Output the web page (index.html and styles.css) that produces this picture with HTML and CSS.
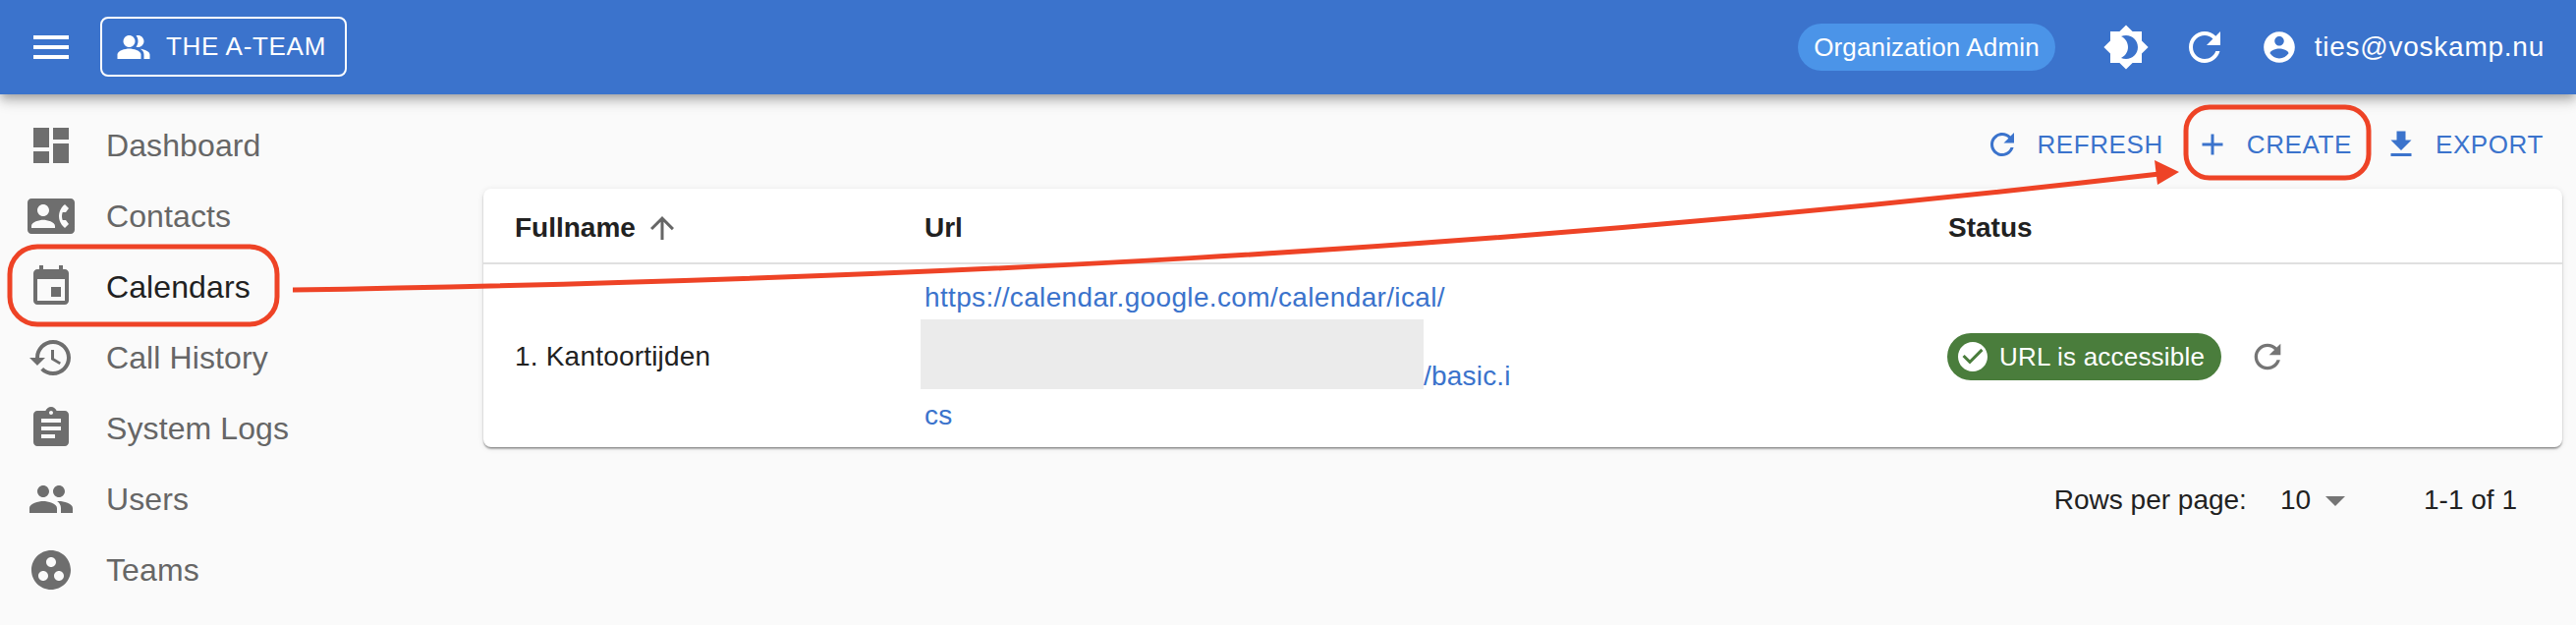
FILE: index.html
```html
<!DOCTYPE html>
<html lang="en">
<head>
    <meta charset="UTF-8">
    <meta name="viewport" content="width=device-width, initial-scale=1.0">
    <title>Calendars</title>
    <link rel="stylesheet" href="styles.css">
</head>
<body>
    <header class="app-bar">
        <svg class="icon-48" viewBox="0 0 24 24"><path d="M3 18h18v-2H3v2zm0-5h18v-2H3v2zm0-7v2h18V6H3z"/></svg>
        <button class="team-button">
            <svg class="icon-36" viewBox="0 0 24 24"><path d="M16.67 13.13C18.04 14.06 19 15.32 19 17v3h4v-3c0-2.18-3.57-3.47-6.33-3.87z"/><path d="M15 12c2.21 0 4-1.79 4-4s-1.79-4-4-4c-.47 0-.91.1-1.33.24C14.5 5.27 15 6.58 15 8s-.5 2.73-1.33 3.76c.42.14.86.24 1.33.24z"/><path d="M9 12c2.21 0 4-1.79 4-4s-1.79-4-4-4-4 1.79-4 4 1.79 4 4 4z"/><path d="M9 13c-2.67 0-8 1.34-8 4v3h16v-3c0-2.66-5.33-4-8-4z"/></svg>
            THE A-TEAM
        </button>
        <div class="app-bar-right">
            <span class="role-chip">Organization Admin</span>
            <svg class="icon-48 theme-icon" viewBox="0 0 24 24"><path d="M20 8.69V4h-4.69L12 .69 8.69 4H4v4.69L.69 12 4 15.31V20h4.69L12 23.31 15.31 20H20v-4.69L23.31 12 20 8.69zM12 18c-.89 0-1.74-.2-2.5-.55C11.56 16.5 13 14.42 13 12s-1.44-4.5-3.5-5.45C10.26 6.2 11.11 6 12 6c3.31 0 6 2.69 6 6s-2.69 6-6 6z"/></svg>
            <svg class="icon-48 reload-icon" viewBox="0 0 24 24"><path d="M17.65 6.35C16.2 4.9 14.21 4 12 4c-4.42 0-7.99 3.58-7.99 8s3.57 8 7.99 8c3.73 0 6.84-2.55 7.73-6h-2.08c-.82 2.33-3.04 4-5.65 4-3.31 0-6-2.69-6-6s2.69-6 6-6c1.66 0 3.14.69 4.22 1.78L13 11h7V4l-2.35 2.35z"/></svg>
            <svg class="account-icon" viewBox="0 0 24 24"><path d="M12 2C6.48 2 2 6.48 2 12s4.48 10 10 10 10-4.48 10-10S17.52 2 12 2zm0 3c1.66 0 3 1.34 3 3s-1.34 3-3 3-3-1.34-3-3 1.34-3 3-3zm0 14.2c-2.5 0-4.71-1.28-6-3.22.03-1.99 4-3.08 6-3.08 1.99 0 5.97 1.09 6 3.08-1.29 1.94-3.5 3.22-6 3.22z"/></svg>
            <span class="user-email">ties@voskamp.nu</span>
        </div>
    </header>

    <div class="layout">
        <nav class="sidebar">
            <a class="nav-item">
                <svg class="icon-48" viewBox="0 0 24 24"><path d="M3 13h8V3H3v10zm0 8h8v-6H3v6zm10 0h8V11h-8v10zm0-18v6h8V3h-8z"/></svg>
                Dashboard
            </a>
            <a class="nav-item">
                <svg class="icon-48" viewBox="0 0 24 24"><path d="M22 3H2C.9 3 0 3.9 0 5v14c0 1.1.9 2 2 2h20c1.1 0 1.99-.9 1.99-2L24 5c0-1.1-.9-2-2-2zM8 6c1.66 0 3 1.34 3 3s-1.34 3-3 3-3-1.34-3-3 1.34-3 3-3zm6 12H2v-1c0-2 4-3.1 6-3.1s6 1.1 6 3.1v1zm3.85-4h1.64L21 16l-1.99 1.99c-1.31-.98-2.28-2.38-2.73-3.99-.18-.64-.28-1.31-.28-2s.1-1.36.28-2c.45-1.62 1.42-3.01 2.73-3.99L21 8l-1.51 2h-1.64c-.22.63-.35 1.3-.35 2s.13 1.37.35 2z"/></svg>
                Contacts
            </a>
            <a class="nav-item active">
                <svg class="icon-48" viewBox="0 0 24 24"><path d="M17 12h-5v5h5v-5zM16 1v2H8V1H6v2H5c-1.11 0-1.99.9-1.99 2L3 19c0 1.1.89 2 2 2h14c1.1 0 2-.9 2-2V5c0-1.1-.9-2-2-2h-1V1h-2zm3 18H5V8h14v11z"/></svg>
                Calendars
            </a>
            <a class="nav-item">
                <svg class="icon-48" viewBox="0 0 24 24"><path d="M13 3c-4.97 0-9 4.03-9 9H1l3.89 3.89.07.14L9 12H6c0-3.87 3.13-7 7-7s7 3.13 7 7-3.13 7-7 7c-1.93 0-3.68-.79-4.94-2.06l-1.42 1.42C8.27 19.99 10.51 21 13 21c4.97 0 9-4.03 9-9s-4.03-9-9-9zm-1 5v5l4.28 2.54.72-1.21-3.5-2.08V8H12z"/></svg>
                Call History
            </a>
            <a class="nav-item">
                <svg class="icon-48" viewBox="0 0 24 24"><path d="M19 3h-4.18C14.4 1.84 13.3 1 12 1c-1.3 0-2.4.84-2.82 2H5c-1.1 0-2 .9-2 2v14c0 1.1.9 2 2 2h14c1.1 0 2-.9 2-2V5c0-1.1-.9-2-2-2zm-7 0c.55 0 1 .45 1 1s-.45 1-1 1-1-.45-1-1 .45-1 1-1zm2 14H7v-2h7v2zm3-4H7v-2h10v2zm0-4H7V7h10v2z"/></svg>
                System Logs
            </a>
            <a class="nav-item">
                <svg class="icon-48" viewBox="0 0 24 24"><path d="M16 11c1.66 0 2.99-1.34 2.99-3S17.66 5 16 5c-1.66 0-3 1.34-3 3s1.34 3 3 3zm-8 0c1.66 0 2.99-1.34 2.99-3S9.66 5 8 5C6.34 5 5 6.34 5 8s1.34 3 3 3zm0 2c-2.33 0-7 1.17-7 3.5V19h14v-2.5c0-2.33-4.67-3.5-7-3.5zm8 0c-.29 0-.62.02-.97.05 1.16.84 1.97 1.97 1.97 3.45V19h6v-2.5c0-2.33-4.67-3.5-7-3.5z"/></svg>
                Users
            </a>
            <a class="nav-item">
                <svg class="icon-48" viewBox="0 0 24 24"><path d="M12 2C6.48 2 2 6.48 2 12s4.48 10 10 10 10-4.48 10-10S17.52 2 12 2zM8 17.5c-1.38 0-2.5-1.12-2.5-2.5s1.12-2.5 2.5-2.5 2.5 1.12 2.5 2.5-1.12 2.5-2.5 2.5zM9.5 8c0-1.38 1.12-2.5 2.5-2.5s2.5 1.12 2.5 2.5-1.12 2.5-2.5 2.5S9.5 9.38 9.5 8zm6.5 9.5c-1.38 0-2.5-1.12-2.5-2.5s1.12-2.5 2.5-2.5 2.5 1.12 2.5 2.5-1.12 2.5-2.5 2.5z"/></svg>
                Teams
            </a>
        </nav>

        <main class="content">
            <div class="toolbar">
                <button class="tool-button">
                    <svg class="icon-36" viewBox="0 0 24 24"><path d="M17.65 6.35C16.2 4.9 14.21 4 12 4c-4.42 0-7.99 3.58-7.99 8s3.57 8 7.99 8c3.73 0 6.84-2.55 7.73-6h-2.08c-.82 2.33-3.04 4-5.65 4-3.31 0-6-2.69-6-6s2.69-6 6-6c1.66 0 3.14.69 4.22 1.78L13 11h7V4l-2.35 2.35z"/></svg>
                    REFRESH
                </button>
                <button class="tool-button">
                    <svg class="icon-36" viewBox="0 0 24 24"><path d="M19 13h-6v6h-2v-6H5v-2h6V5h2v6h6v2z"/></svg>
                    CREATE
                </button>
                <button class="tool-button">
                    <svg class="icon-36" viewBox="0 0 24 24"><path d="M19 9h-4V3H9v6H5l7 7 7-7zM5 18v2h14v-2H5z"/></svg>
                    EXPORT
                </button>
            </div>

            <div class="card">
                <table class="calendar-table">
                    <thead>
                        <tr>
                            <th class="col-name">
                                <span class="sort-head">
                                    Fullname
                                    <svg class="icon-36" viewBox="0 0 24 24"><path d="M4 12l1.41 1.41L11 7.83V20h2V7.83l5.58 5.59L20 12l-8-8-8 8z"/></svg>
                                </span>
                            </th>
                            <th class="col-url">Url</th>
                            <th>Status</th>
                        </tr>
                    </thead>
                    <tbody>
                        <tr>
                            <td>1. Kantoortijden</td>
                            <td>
                                <a class="url-first">https://calendar.google.com/calendar/ical/t</a>
                                <div class="url-masked">
                                    <span class="url-mask"></span>
                                    <a class="url-link">/basic.i</a>
                                </div>
                                <a class="url-link url-end">cs</a>
                            </td>
                            <td>
                                <div class="status-cell">
                                    <span class="status-chip">
                                        <svg class="icon-36" viewBox="0 0 24 24"><path d="M12 2C6.48 2 2 6.48 2 12s4.48 10 10 10 10-4.48 10-10S17.52 2 12 2zm-2 15l-5-5 1.41-1.41L10 14.17l7.59-7.59L19 8l-9 9z"/></svg>
                                        URL is accessible
                                    </span>
                                    <svg class="status-reload" viewBox="0 0 24 24"><path d="M17.65 6.35C16.2 4.9 14.21 4 12 4c-4.42 0-7.99 3.58-7.99 8s3.57 8 7.99 8c3.73 0 6.84-2.55 7.73-6h-2.08c-.82 2.33-3.04 4-5.65 4-3.31 0-6-2.69-6-6s2.69-6 6-6c1.66 0 3.14.69 4.22 1.78L13 11h7V4l-2.35 2.35z"/></svg>
                                </div>
                            </td>
                        </tr>
                    </tbody>
                </table>
            </div>

            <div class="pagination">
                <span>Rows per page:</span>
                <span class="rows-select">
                    10
                    <svg class="icon-48" viewBox="0 0 24 24"><path d="M7 10l5 5 5-5z"/></svg>
                </span>
                <span>1-1 of 1</span>
            </div>
        </main>
    </div>

    <!-- red annotations drawn over the screenshot -->
    <svg class="annotations" viewBox="0 0 2622 636">
        <rect x="10" y="251" width="272" height="79" rx="28"/>
        <rect x="2225" y="109" width="186" height="72" rx="24"/>
        <path d="M298 295 C 900 285 1500 258 2198 177"/>
        <polygon points="2218,175 2193,163 2196,188"/>
    </svg>
</body>
</html>
```

FILE: styles.css
```css
body {
    font-family: "Liberation Sans", Arial, sans-serif;
    background: #fafafa;
    margin: 0;
    padding: 0;
    width: 2622px;
    height: 636px;
    overflow: hidden;
    position: relative;
    color: #212121;
}

svg {
    fill: currentColor;
    flex-shrink: 0;
}

button {
    font-family: inherit;
    background: none;
    color: inherit;
    border: none;
    padding: 0;
}

.icon-48 {
    width: 48px;
    height: 48px;
}

.icon-36 {
    width: 36px;
    height: 36px;
}

.app-bar {
    height: 96px;
    background: #3b73cc;
    color: white;
    display: flex;
    align-items: center;
    padding: 0 32px 0 28px;
    box-shadow: 0 4px 8px -2px rgba(0, 0, 0, 0.2), 0 8px 10px rgba(0, 0, 0, 0.14), 0 2px 20px rgba(0, 0, 0, 0.12);
    position: relative;
}

.team-button {
    height: 61px;
    margin-left: 26px;
    padding: 0 19px 0 14px;
    display: flex;
    align-items: center;
    gap: 15px;
    border: 2px solid white;
    border-radius: 8px;
    font-size: 26px;
    letter-spacing: 0.7px;
    box-sizing: border-box;
    margin-top: -1px;
}

.app-bar-right {
    margin-left: auto;
    display: flex;
    align-items: center;
}

.role-chip {
    height: 48px;
    line-height: 48px;
    padding: 0 16px;
    background: #4b94e8;
    border-radius: 24px;
    font-size: 26px;
    letter-spacing: 0.15px;
}

.theme-icon {
    margin-left: 48px;
}

.reload-icon {
    margin-left: 32px;
}

.account-icon {
    width: 38px;
    height: 38px;
    margin-left: 33px;
}

.user-email {
    margin-left: 17px;
    font-size: 28px;
    letter-spacing: 0.75px;
}

.layout {
    display: flex;
    height: 540px;
}

.sidebar {
    width: 492px;
    flex-shrink: 0;
    padding-top: 16px;
}

.nav-item {
    height: 72px;
    padding-left: 28px;
    display: flex;
    align-items: center;
    gap: 32px;
    font-size: 32px;
    letter-spacing: 0.1px;
    color: #666;
}

.nav-item svg {
    color: #6e6e6e;
}

.nav-item.active {
    color: #212121;
}

.content {
    flex: 1;
    padding-right: 14px;
    padding-top: 16px;
}

.toolbar {
    height: 70px;
    margin-bottom: 10px;
    padding-right: 19px;
    display: flex;
    justify-content: flex-end;
    align-items: center;
    gap: 32px;
}

.tool-button {
    display: flex;
    align-items: center;
    gap: 17px;
    font-size: 26px;
    letter-spacing: 0.6px;
    color: #3b73cc;
}

.card {
    background: white;
    border-radius: 8px;
    box-shadow: 0 2px 2px -1px rgba(0, 0, 0, 0.3), 0 2px 2px rgba(0, 0, 0, 0.2), 0 1px 6px rgba(0, 0, 0, 0.1);
}

.calendar-table {
    width: 100%;
    table-layout: fixed;
    border-collapse: collapse;
    font-size: 28px;
}

.calendar-table th {
    height: 70px;
    padding: 5px 0 0;
    text-align: left;
    border-bottom: 2px solid #e0e0e0;
    font-weight: bold;
}

.calendar-table td {
    padding: 14px 0 12px;
    letter-spacing: 0.2px;
}

.calendar-table th:first-child,
.calendar-table td:first-child {
    padding-left: 32px;
}

.col-name {
    width: 417px;
    box-sizing: content-box;
}

.col-url {
    width: 1042px;
}

.sort-head {
    display: flex;
    align-items: center;
    gap: 9px;
}

.sort-head svg {
    color: #666;
}

.url-first {
    display: block;
    width: 530px;
    height: 40px;
    line-height: 40px;
    white-space: nowrap;
    overflow: hidden;
    letter-spacing: 0.35px;
    color: #3b73cc;
}

.url-masked {
    height: 80px;
    display: flex;
    align-items: flex-end;
}

.url-mask {
    width: 512px;
    height: 71px;
    margin: 0 0 7px -4px;
    background: #ebebeb;
}

.url-link {
    display: block;
    line-height: 40px;
    color: #3b73cc;
}

.status-cell {
    display: flex;
    align-items: center;
    gap: 27px;
    margin-left: -1px;
}

.status-chip {
    height: 48px;
    padding: 0 17px 0 8px;
    display: flex;
    align-items: center;
    gap: 9px;
    background: #4a7d3c;
    border-radius: 24px;
    color: white;
    font-size: 26px;
    letter-spacing: 0.2px;
}

.status-reload {
    width: 40px;
    height: 40px;
    color: #757575;
}

.pagination {
    margin-top: 28px;
    padding-right: 46px;
    display: flex;
    justify-content: flex-end;
    align-items: center;
    height: 52px;
    font-size: 28px;
}

.rows-select {
    margin: 0 66px 0 34px;
    display: flex;
    align-items: center;
    gap: 1px;
}

.rows-select svg {
    color: #757575;
}

.annotations {
    position: absolute;
    top: 0;
    left: 0;
    width: 2622px;
    height: 636px;
    pointer-events: none;
}

.annotations rect,
.annotations path {
    fill: none;
    stroke: #ee4326;
    stroke-width: 5;
}

.annotations polygon {
    fill: #ee4326;
}
```
